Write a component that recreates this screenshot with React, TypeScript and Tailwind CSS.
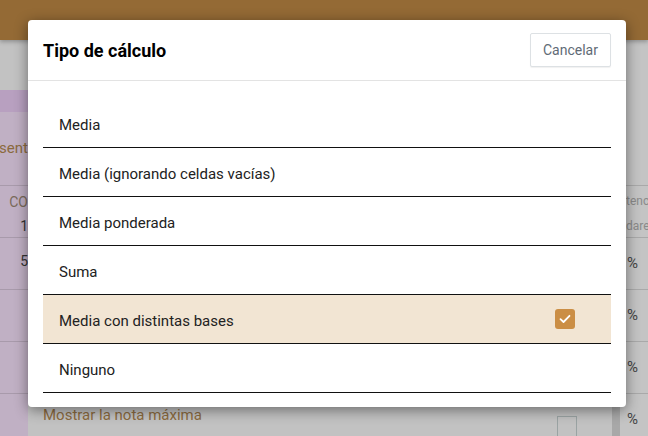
import React from 'react';

const options = [
  'Media',
  'Media (ignorando celdas vacías)',
  'Media ponderada',
  'Suma',
  'Media con distintas bases',
  'Ninguno',
];

function CheckIcon() {
  return (
    <svg width="12" height="10" viewBox="0 0 12 10" fill="none">
      <path d="M1.5 5.2 L4.5 8 L10.5 1.8" stroke="white" strokeWidth="1.8" strokeLinecap="round" strokeLinejoin="round" />
    </svg>
  );
}

export default function App() {
  const selected = 4;
  return (
    <div className="relative w-[648px] h-[436px] overflow-hidden bg-[#c2c2c2] font-['Roboto',sans-serif]">
      {/* Dimmed page behind the dialog */}
      <div className="flex flex-col h-full">
        <div className="h-10 shrink-0 bg-[#946a35] shadow-[0_2px_4px_rgba(0,0,0,0.25)] relative z-10" />
        <div className="flex flex-1 min-h-0 overflow-hidden">
          {/* left column */}
          <div className="w-[28px] shrink-0 flex flex-col overflow-hidden">
            <div className="h-[50px] shrink-0 bg-[#c2c2c2]" />
            <div className="h-[22px] shrink-0 bg-[#b8a0c0]" />
            <div className="flex-1 bg-[#c0b0c4] flex flex-col">
              <div className="h-[73px] shrink-0 flex items-center justify-end text-[15px] text-[#8b6a3e] whitespace-nowrap">sent</div>
              <div className="h-[52px] shrink-0 border-t border-[#a89aab] flex flex-col items-end pt-[4px] text-[14px] text-[#7a6a5a] leading-[24px]">
                <span>CO</span>
                <span className="text-[#333]">1</span>
              </div>
              <div className="h-[52px] shrink-0 border-t border-[#a89aab] flex items-center justify-end pb-1 text-[14px] text-[#333]">5</div>
              <div className="h-[52px] shrink-0 border-t border-[#a89aab]" />
              <div className="h-[52px] shrink-0 border-t border-[#a89aab]" />
              <div className="flex-1 border-t border-[#a89aab]" />
            </div>
          </div>
          {/* middle panel */}
          <div className="flex-1 flex flex-col justify-end">
            <div className="h-[32px] shrink-0 flex items-start justify-between pl-[15px] pr-[35px]">
              <span className="text-[15px] text-[#8b6a3e]">Mostrar la nota máxima</span>
              <span className="w-[20px] h-[24px] mt-[12px] border border-[#9aa3a3]" />
            </div>
          </div>
          {/* scrollbar */}
          <div className="w-[8px] shrink-0 flex flex-col justify-end">
            <div className="h-[40px] bg-[#a8a8a8]" />
          </div>
          {/* right column */}
          <div className="w-[28px] shrink-0 flex flex-col bg-[#c4c4c4] overflow-hidden">
            <div className="h-[145px] shrink-0" />
            <div className="h-[52px] shrink-0 border-t border-[#a9a9a9] flex flex-col pt-[3px] pl-[6px] text-[12px] text-[#8a8a8a] leading-[25px] whitespace-nowrap">
              <span>tencia</span>
              <span>dares</span>
            </div>
            {[0, 1, 2, 3].map((i) => (
              <div key={i} className="h-[52px] shrink-0 border-t border-[#a9a9a9] flex items-center pl-[7px] text-[15px] text-[#444]">
                %
              </div>
            ))}
          </div>
        </div>
      </div>

      {/* Dialog */}
      <div className="absolute z-20 left-[28px] top-[20px] w-[598px] h-[387px] bg-white rounded-[4px] shadow-[0_3px_14px_rgba(0,0,0,0.45)] flex flex-col">
        <div className="h-[61px] shrink-0 border-b border-[#e3e3e3] flex items-center justify-between pl-[15px] pr-[15px]">
          <h2 className="text-[18px] font-bold text-black">Tipo de cálculo</h2>
          <button className="h-[34px] w-[81px] border border-[#dde1e4] rounded-[2px] shadow-[0_1px_1px_rgba(0,0,0,0.06)] text-[14px] text-[#5f6b76] bg-white">
            Cancelar
          </button>
        </div>
        <div className="pt-[18px] px-[15px] flex flex-col">
          {options.map((o, i) => (
            <div
              key={o}
              className={`border-b border-[#111] flex items-center justify-between pl-[16px] pr-[36px] pt-[5px] text-[15px] text-[#222] ${
                i === selected ? 'bg-[#f2e5d3] border-t border-t-[#111] -mt-px h-[50px]' : 'h-[49px]'
              }`}
            >
              <span>{o}</span>
              {i === selected && (
                <span className="w-[20px] h-[20px] -mt-[6px] rounded-[3px] bg-[#cb8e45] flex items-center justify-center">
                  <CheckIcon />
                </span>
              )}
            </div>
          ))}
        </div>
      </div>
    </div>
  );
}
